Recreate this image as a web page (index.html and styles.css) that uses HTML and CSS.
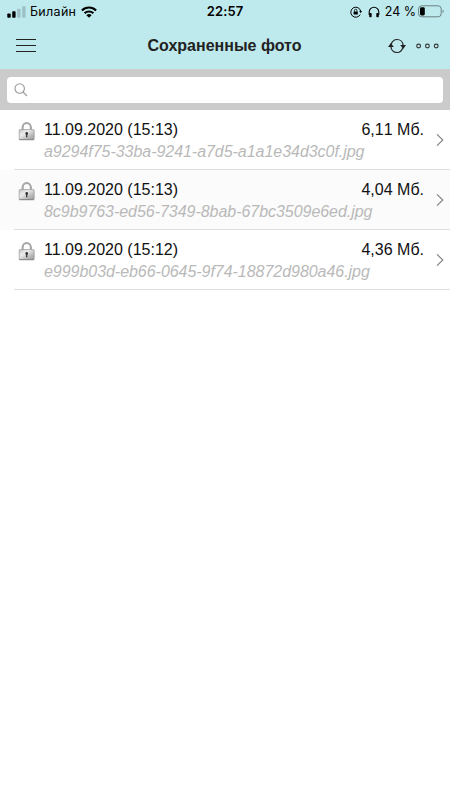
FILE: index.html
```
<!DOCTYPE html>
<html lang="ru">
<head>
  <meta charset="UTF-8">
  <meta name="viewport" content="width=device-width, initial-scale=1.0">
  <title>Сохраненные фото</title>
  <link rel="stylesheet" href="styles.css">
</head>
<body>
  <svg class="defs" width="0" height="0">
    <linearGradient id="metal" x1="0" y1="0" x2="1" y2="1">
      <stop offset="0" stop-color="#c4c4c4"/>
      <stop offset="0.35" stop-color="#ececec"/>
      <stop offset="0.65" stop-color="#c0c0c0"/>
      <stop offset="1" stop-color="#969696"/>
    </linearGradient>
    <symbol id="lock" viewBox="0 0 18 20">
      <path d="M4.6 9V6.2a4.1 4.1 0 0 1 8.2 0V9" fill="none" stroke="#8a8a8a" stroke-width="1.9"/>
      <path d="M4.6 9V6.2a4.1 4.1 0 0 1 8.2 0V9" fill="none" stroke="#c4c4c4" stroke-width="0.7"/>
      <rect x="1.2" y="8.6" width="15" height="10" rx="0.8" fill="url(#metal)" stroke="#989898" stroke-width="0.7"/>
      <path d="M1.3 18.7h14.8" stroke="#777" stroke-width="0.8"/>
      <circle cx="8.7" cy="12.4" r="1.3" fill="#333"/>
      <path d="M8.7 12.5v3.8" stroke="#333" stroke-width="1.3"/>
    </symbol>
    <symbol id="chevron" viewBox="0 0 8 14">
      <path d="M1 1.4L6.8 7L1 12.6" fill="none" stroke="#858585" stroke-width="1.2"/>
    </symbol>
  </svg>

  <header class="header">
    <div class="status">
      <div class="status-left">
        <svg width="19" height="12" viewBox="0 0 19 12">
          <rect x="0.3" y="7.5" width="3.4" height="4.3" rx="0.8"/>
          <rect x="5.2" y="5.3" width="3.4" height="6.5" rx="0.8"/>
          <rect x="10.2" y="2.8" width="3.4" height="9" rx="0.8" fill="#9cc0c5"/>
          <rect x="15.2" y="0.3" width="3.4" height="11.5" rx="0.8" fill="#9cc0c5"/>
        </svg>
        <span class="carrier">Билайн</span>
        <svg width="16" height="12" viewBox="0 0 16 12" fill="none" stroke="#000" stroke-width="2.1">
          <path d="M0.9 4.4a10.2 10.2 0 0 1 14.2 0"/>
          <path d="M3.6 7.3a6.3 6.3 0 0 1 8.8 0"/>
          <path d="M8 11.8L5.4 9.2a3.7 3.7 0 0 1 5.2 0z" fill="#000" stroke="none"/>
        </svg>
      </div>
      <span class="clock">22:57</span>
      <div class="status-right">
        <svg width="12" height="12" viewBox="0 0 12 12" fill="none" stroke="#000" stroke-width="1">
          <path d="M10.2 8.6a5 5 0 1 1 0.5-3.4"/>
          <path d="M9.2 5.1h2.8l-1.3 2.1z" fill="#000" stroke="none"/>
          <rect x="3.6" y="5.4" width="4.2" height="3.2" rx="0.4" fill="#000" stroke="none"/>
          <path d="M4.5 5.6V4.4a1.2 1.2 0 0 1 2.4 0v1.2" stroke-width="0.8"/>
        </svg>
        <svg class="headphones" width="12" height="12" viewBox="0 0 12 12">
          <path d="M1.2 9V6a4.8 4.8 0 0 1 9.6 0v3" fill="none" stroke="#000" stroke-width="1.1"/>
          <rect x="1.2" y="7" width="2.5" height="4.2" rx="0.8"/>
          <rect x="8.3" y="7" width="2.5" height="4.2" rx="0.8"/>
        </svg>
        <span class="percent">24 %</span>
        <svg width="27" height="13" viewBox="0 0 27 13">
          <rect x="0.6" y="0.8" width="22.6" height="11" rx="3" fill="none" stroke="#6b8184" stroke-width="1"/>
          <rect x="2" y="2.2" width="4.8" height="8.2" rx="1.4"/>
          <path d="M24.6 4.4a2.4 2.4 0 0 1 0 3.9z" fill="#6b8184"/>
        </svg>
      </div>
    </div>
    <div class="navbar">
      <svg width="20" height="15" viewBox="0 0 20 15" stroke="#222" stroke-width="1.2">
        <path d="M0 1.5h20M0 7.5h20M0 13.5h20"/>
      </svg>
      <h1 class="title">Сохраненные фото</h1>
      <div class="actions">
        <svg width="18" height="16" viewBox="0 0 18 16">
          <g fill="none" stroke="#222" stroke-width="1.2">
            <path d="M3 6.6C4.1 3.2 6.3 1.5 9 1.5C12.4 1.5 14.9 4 15.1 7.4"/>
            <path d="M15 9.4C13.9 12.8 11.7 14.5 9 14.5C5.6 14.5 3.1 12 2.9 8.6"/>
          </g>
          <path d="M12.2 6.9h5.8l-2.8 4.1zM0 9.1h5.8L2.9 5z" fill="#222"/>
        </svg>
        <svg width="23" height="6" viewBox="0 0 23 6" fill="none" stroke="#333" stroke-width="1.1">
          <circle cx="2.6" cy="3" r="1.9"/>
          <circle cx="11.4" cy="3" r="1.9"/>
          <circle cx="20.2" cy="3" r="1.9"/>
        </svg>
      </div>
    </div>
  </header>

  <div class="search">
    <div class="search-field">
      <svg width="14" height="14" viewBox="0 0 14 14" fill="none" stroke="#999" stroke-width="1.1">
        <circle cx="5.7" cy="5.5" r="4.7"/>
        <path d="M9 9l4 4"/>
      </svg>
    </div>
  </div>

  <main class="list">
    <div class="item">
      <div class="row">
        <svg class="lock"><use href="#lock"/></svg>
        <div class="info">
          <div class="line"><span>11.09.2020 (15:13)</span><span class="size">6,11 Мб.</span></div>
          <div class="file">a9294f75-33ba-9241-a7d5-a1a1e34d3c0f.jpg</div>
        </div>
        <svg class="chevron"><use href="#chevron"/></svg>
      </div>
    </div>
    <div class="item">
      <div class="row">
        <svg class="lock"><use href="#lock"/></svg>
        <div class="info">
          <div class="line"><span>11.09.2020 (15:13)</span><span class="size">4,04 Мб.</span></div>
          <div class="file">8c9b9763-ed56-7349-8bab-67bc3509e6ed.jpg</div>
        </div>
        <svg class="chevron"><use href="#chevron"/></svg>
      </div>
    </div>
    <div class="item">
      <div class="row">
        <svg class="lock"><use href="#lock"/></svg>
        <div class="info">
          <div class="line"><span>11.09.2020 (15:12)</span><span class="size">4,36 Мб.</span></div>
          <div class="file">e999b03d-eb66-0645-9f74-18872d980a46.jpg</div>
        </div>
        <svg class="chevron"><use href="#chevron"/></svg>
      </div>
    </div>
  </main>
</body>
</html>
```
FILE: styles.css
```
* {
  box-sizing: border-box;
}
body {
  margin: 0;
  min-height: 100vh;
  background: #fff;
  color: #111;
  font-family: "Liberation Sans", Arial, sans-serif;
}
svg {
  display: block;
  flex-shrink: 0;
}
.defs {
  position: absolute;
}
.header {
  height: 69px;
  background: #beeaed;
}
.status {
  display: grid;
  grid-template-columns: 1fr auto 1fr;
  align-items: center;
  height: 23px;
  padding: 0 5px 0 7px;
  font-family: Inter, sans-serif;
  font-size: 13px;
  line-height: 15px;
  color: #000;
}
.status-left,
.status-right {
  display: flex;
  align-items: center;
}
.status-right {
  justify-content: flex-end;
}
.carrier {
  margin: 0 5px 0 4px;
  font-size: 12.5px;
  letter-spacing: 0.3px;
}
.clock {
  margin-right: 2px;
  padding-bottom: 1px;
  font-weight: 600;
  letter-spacing: 0.1px;
}
.headphones {
  margin-left: 6px;
}
.percent {
  margin: 0 2px 0 5px;
  padding-bottom: 1px;
  font-size: 12.5px;
}
.navbar {
  display: grid;
  grid-template-columns: 1fr auto 1fr;
  align-items: center;
  height: 45px;
  padding: 0 11px 0 16px;
}
.title {
  margin: 0 6px 0 0;
  font-size: 16px;
  font-weight: bold;
  color: #222;
}
.actions {
  display: flex;
  align-items: center;
  justify-content: flex-end;
  gap: 10px;
}
.search {
  height: 41px;
  padding: 8px 7px 7px;
  background: #cbcbcb;
}
.search-field {
  display: flex;
  align-items: center;
  height: 26px;
  padding-left: 7px;
  background: #fff;
  border-radius: 4px;
}
.item:nth-child(even) {
  background: #fbfbfb;
}
.row {
  display: flex;
  height: 60px;
  margin-left: 14px;
  padding: 10px 6px 0 4px;
  border-bottom: 1px solid #dedede;
}
.lock {
  width: 18px;
  height: 20px;
  margin-top: 1px;
}
.info {
  flex: 1;
  margin-left: 8px;
}
.line {
  display: flex;
  justify-content: space-between;
  font-size: 16px;
  line-height: 20px;
}
.size {
  font-kerning: none;
}
.file {
  margin-top: 2px;
  font-size: 16px;
  font-style: italic;
  line-height: 20px;
  letter-spacing: -0.04px;
  color: #b9b9b9;
}
.chevron {
  width: 8px;
  height: 14px;
  margin: 13px 0 0 12px;
}
```
